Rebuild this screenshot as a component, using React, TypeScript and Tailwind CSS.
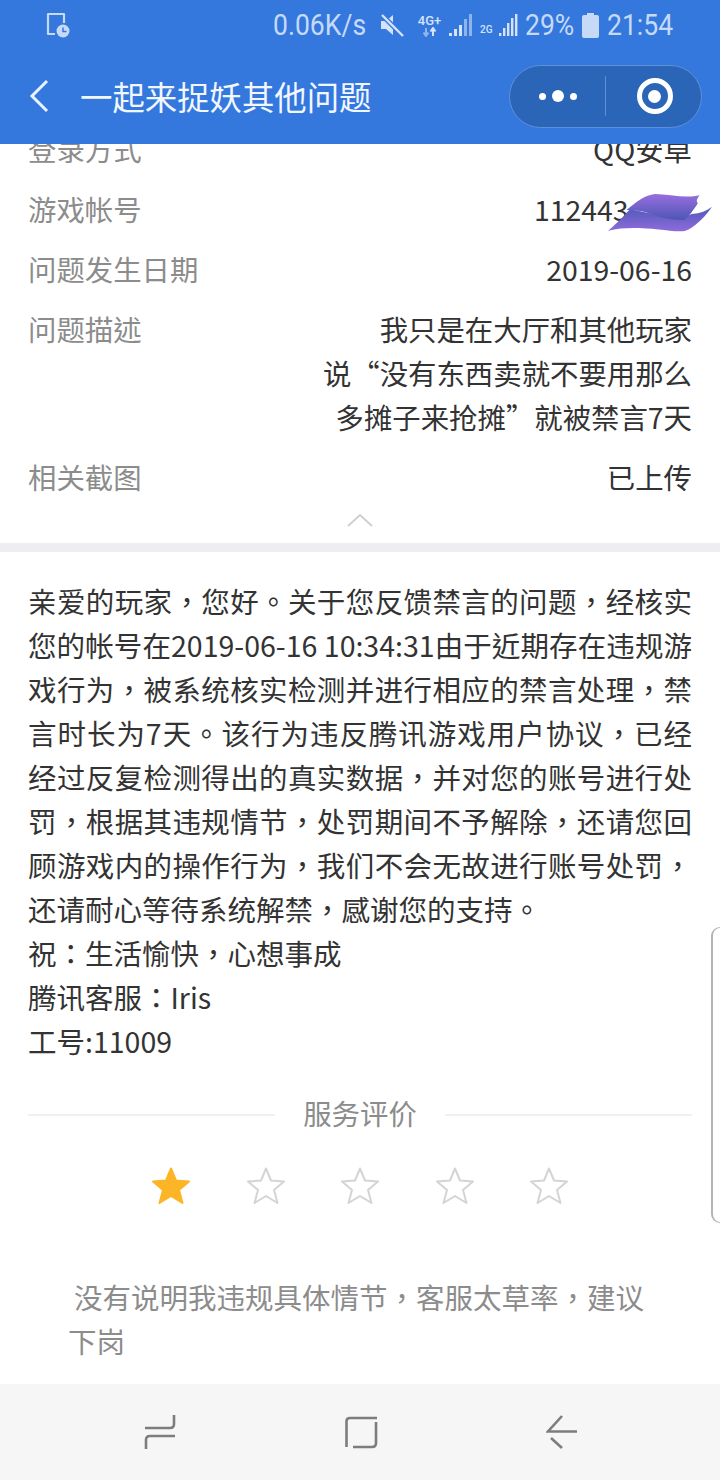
const cjk = "font-['Noto_Sans_CJK_TC','Noto_Sans_CJK_SC',sans-serif]";

const rows = [
  { label: '登录方式', value: ['QQ安卓'] },
  { label: '游戏帐号', value: ['112443'] },
  { label: '问题发生日期', value: ['2019-06-16'] },
  { label: '问题描述', value: ['我只是在大厅和其他玩家', '说“没有东西卖就不要用那么', '多摊子来抢摊”就被禁言7天'] },
  { label: '相关截图', value: ['已上传'] },
];

const reply =
  '亲爱的玩家，您好。关于您反馈禁言的问题，经核实您的帐号在2019-06-16 10:34:31由于近期存在违规游戏行为，被系统核实检测并进行相应的禁言处理，禁言时长为7天。该行为违反腾讯游戏用户协议，已经经过反复检测得出的真实数据，并对您的账号进行处罚，根据其违规情节，处罚期间不予解除，还请您回顾游戏内的操作行为，我们不会无故进行账号处罚，还请耐心等待系统解禁，感谢您的支持。';

const sign = ['祝：生活愉快，心想事成', '腾讯客服：Iris', '工号:11009'];

function Star({ filled }: { filled: boolean }) {
  return (
    <svg width="40" height="40" viewBox="0 0 40 40">
      <path
        d="M20 2.5 L25 14.5 L38 15.5 L28 24 L31.5 37 L20 30 L8.5 37 L12 24 L2 15.5 L15 14.5 Z"
        fill={filled ? '#fdb528' : 'none'}
        stroke={filled ? '#fdb528' : '#d4d4d4'}
        strokeWidth="2"
        strokeLinejoin="round"
      />
    </svg>
  );
}

function StatusBar() {
  return (
    <div className="h-[50px] flex items-center pl-[46px] text-[#c6daf8] text-[30px] font-['Roboto',sans-serif]">
      <svg width="24" height="26" viewBox="0 0 24 26" fill="none">
        <path d="M9 22 H2 V2 H18 V11" stroke="#c6daf8" strokeWidth="2.2" strokeLinejoin="round" />
        <circle cx="17" cy="19" r="6.5" fill="#c6daf8" />
        <path d="M17 15.5 V19.5 H20.5" stroke="#3478de" strokeWidth="1.5" />
      </svg>
      <span className="ml-[203px] w-[93px] whitespace-nowrap leading-none origin-left scale-x-[0.885]">0.06K/s</span>
      <svg className="ml-[14px]" width="24" height="24" viewBox="0 0 24 24" fill="#d5e3fa">
        <path d="M1 8 H6 L13 2 V22 L6 16 H1 Z" />
        <path d="M1 1 L23 23" stroke="#3478de" strokeWidth="5" />
        <path d="M2 2 L23 23" stroke="#d5e3fa" strokeWidth="2.4" />
      </svg>
      <div className="ml-[13px] flex flex-col items-center w-[25px] leading-none text-[#d5e3fa]">
        <span className="text-[13px] font-medium">4G+</span>
        <svg width="14" height="10" viewBox="0 0 14 10" fill="none" strokeWidth="2">
          <path d="M3 1 V8 M0.500 5.500 L3 9 L5.500 5.500" stroke="#8fb3ec" />
          <path d="M10 9 V2 M7.500 4.500 L10 1 L12.500 4.500" stroke="#d5e3fa" />
        </svg>
      </div>
      <svg className="ml-[7px]" width="24" height="24" viewBox="0 0 24 24" fill="#8fb3ec">
        <rect x="0" y="20" width="3" height="3" fill="#d5e3fa" />
        <rect x="5" y="16" width="3" height="7" fill="#d5e3fa" />
        <rect x="10" y="12" width="3" height="11" fill="#d5e3fa" />
        <rect x="15" y="6" width="3" height="17" />
        <rect x="20" y="1" width="3" height="22" />
      </svg>
      <span className="ml-[7px] w-[12px] text-[10px] leading-none font-medium text-[#d5e3fa] mt-[10px]">2G</span>
      <svg className="ml-[7px]" width="19" height="24" viewBox="0 0 19 24" fill="#d5e3fa">
        <rect x="0" y="20" width="2.4" height="3" />
        <rect x="4" y="15" width="2.4" height="8" />
        <rect x="8" y="10" width="2.4" height="13" />
        <rect x="12" y="5" width="2.4" height="18" />
        <rect x="16" y="1" width="2.4" height="22" />
      </svg>
      <span className="ml-[7px] w-[49px] whitespace-nowrap leading-none origin-left scale-x-[0.885]">29%</span>
      <svg className="ml-[8px]" width="17" height="25" viewBox="0 0 17 25" fill="#c6daf8">
        <path d="M5 0 H12 V2 H15 A2 2 0 0 1 17 4 V23 A2 2 0 0 1 15 25 H2 A2 2 0 0 1 0 23 V4 A2 2 0 0 1 2 2 H5 Z" />
      </svg>
      <span className="ml-[8px] w-[66px] whitespace-nowrap leading-none origin-left scale-x-[0.885]">21:54</span>
    </div>
  );
}

function TitleBar() {
  return (
    <div className="h-[94px] pb-[2px] flex items-center pl-[29px] pr-[18px]">
      <svg width="20" height="34" viewBox="0 0 20 34" fill="none">
        <path d="M18 2 L3 17 L18 32" stroke="#eaf1fc" strokeWidth="3" />
      </svg>
      <span className={`ml-[31px] text-[32.4px] leading-none text-[#f2f6fd] ${cjk}`}>一起来捉妖其他问题</span>
      <div className="ml-auto w-[193px] h-[63px] rounded-full bg-[#2a65b8] border border-[#5f90d8] flex items-center">
        <div className="w-[95px] flex items-center justify-center gap-[6px]">
          <span className="w-[7px] h-[7px] rounded-full bg-white" />
          <span className="w-[12px] h-[12px] rounded-full bg-white" />
          <span className="w-[7px] h-[7px] rounded-full bg-white" />
        </div>
        <div className="w-px h-[40px] bg-[#5f90d8]" />
        <div className="flex-1 flex items-center justify-center pl-[2px]">
          <div className="w-[36px] h-[36px] rounded-full border-[5px] border-white flex items-center justify-center">
            <span className="w-[13px] h-[13px] rounded-full bg-white" />
          </div>
        </div>
      </div>
    </div>
  );
}

function NavBar() {
  return (
    <div className="h-[96px] bg-[#f6f6f6] flex items-center pl-[144px] pr-[143px] justify-between">
      <svg width="32" height="36" viewBox="0 0 32 36" fill="none" stroke="#7d7d7d" strokeWidth="2.6">
        <path d="M30 1 V10 Q30 14 26 14 H1" />
        <path d="M31 22 H6 Q2 22 2 26 V35" />
      </svg>
      <svg width="33" height="33" viewBox="0 0 33 33" fill="none" stroke="#7d7d7d" strokeWidth="2.6">
        <path d="M32 2 H5 Q1.500 2 1.500 5 V31" />
        <path d="M31 6 V27 Q31 31 27 31 H8" />
      </svg>
      <svg width="31" height="34" viewBox="0 0 31 34" fill="none" stroke="#7d7d7d" strokeWidth="2.6">
        <path d="M16 1 L2 16.500 H31" />
        <path d="M5 23 L16 33" />
      </svg>
    </div>
  );
}

export default function App() {
  return (
    <div className={`relative w-[720px] h-[1480px] overflow-hidden bg-white flex flex-col ${cjk}`}>
      <header className="relative z-10 h-[144px] shrink-0 bg-[#3478de]">
        <StatusBar />
        <TitleBar />
      </header>

      <main className="flex-1 overflow-hidden">
        <div className="-mt-[17px] px-[28px] flex flex-col gap-[16px]">
          {rows.map((row) => (
            <div key={row.label} className="flex justify-between text-[28.4px] leading-[44px]">
              <div className="text-[#8c8c8c]">{row.label}</div>
              {row.label === '游戏帐号' ? (
                <div className="relative w-[158px] text-[#333333]">
                  {row.value[0]}
                  <svg className="absolute left-[74px] top-[6px]" width="104" height="40" viewBox="0 0 310 118">
                    <defs>
                      <linearGradient id="sheetA" x1="0" y1="0" x2="0" y2="1">
                        <stop offset="0" stopColor="#9a6ee0" />
                        <stop offset="1" stopColor="#4d56b4" />
                      </linearGradient>
                      <linearGradient id="sheetB" x1="0" y1="0" x2="0" y2="1">
                        <stop offset="0" stopColor="#4f58b8" />
                        <stop offset="1" stopColor="#8f6bdc" />
                      </linearGradient>
                    </defs>
                    <path d="M0 112 C28 90 48 66 66 48 L210 78 L250 62 C275 60 295 52 310 40 C292 66 268 92 240 108 C225 118 190 112 150 108 C100 104 50 100 0 112 Z" fill="url(#sheetB)" />
                    <path d="M55 50 C85 25 110 5 140 2 C180 2 230 16 273 6 C265 16 262 24 268 30 C255 50 240 70 228 80 C190 82 150 70 110 56 C90 50 70 52 55 50 Z" fill="url(#sheetA)" />
                  </svg>
                </div>
              ) : (
                <div className="text-right text-[#333333]">
                  {row.value.map((line) => (
                    <div key={line}>{line}</div>
                  ))}
                </div>
              )}
            </div>
          ))}
        </div>

        <div className="flex justify-center mt-[13px] h-[20px]">
          <svg width="28" height="16" viewBox="0 0 28 16" fill="none">
            <path d="M2 14 L14 3 L26 14" stroke="#cfcfcf" strokeWidth="2" />
          </svg>
        </div>

        <div className="mt-[11px] h-[9px] bg-[#eeeef1]" />

        <div className="mt-[27px] px-[28px] text-[28.5px] leading-[44px] text-[#333333]">
          <div className="text-justify">{reply}</div>
          {sign.map((line) => (
            <div key={line} className="whitespace-nowrap">{line}</div>
          ))}
        </div>

        <div className="mt-[28px] px-[28px] flex items-center">
          <div className="flex-1 h-[2px] bg-[#f0f0f0]" />
          <div className="w-[170px] pb-[4px] text-center text-[28.4px] leading-[44px] text-[#8c8c8c]">服务评价</div>
          <div className="flex-1 h-[2px] bg-[#f0f0f0]" />
        </div>

        <div className="mt-[27px] flex justify-center gap-[54.5px]">
          <Star filled />
          <Star filled={false} />
          <Star filled={false} />
          <Star filled={false} />
          <Star filled={false} />
        </div>

        <div className="mt-[69px] pl-[68px] pr-[70px] text-[28.5px] leading-[44px] text-[#8c8c8c]">
          <div className="pl-[6px] whitespace-nowrap">没有说明我违规具体情节，客服太草率，建议</div>
          <div>下岗</div>
        </div>
      </main>

      <NavBar />

      <div className="absolute right-0 top-[927px] w-[9px] h-[296px] rounded-l-[10px] border-l-2 border-t border-b border-[#b5b5b5]" />
    </div>
  );
}
